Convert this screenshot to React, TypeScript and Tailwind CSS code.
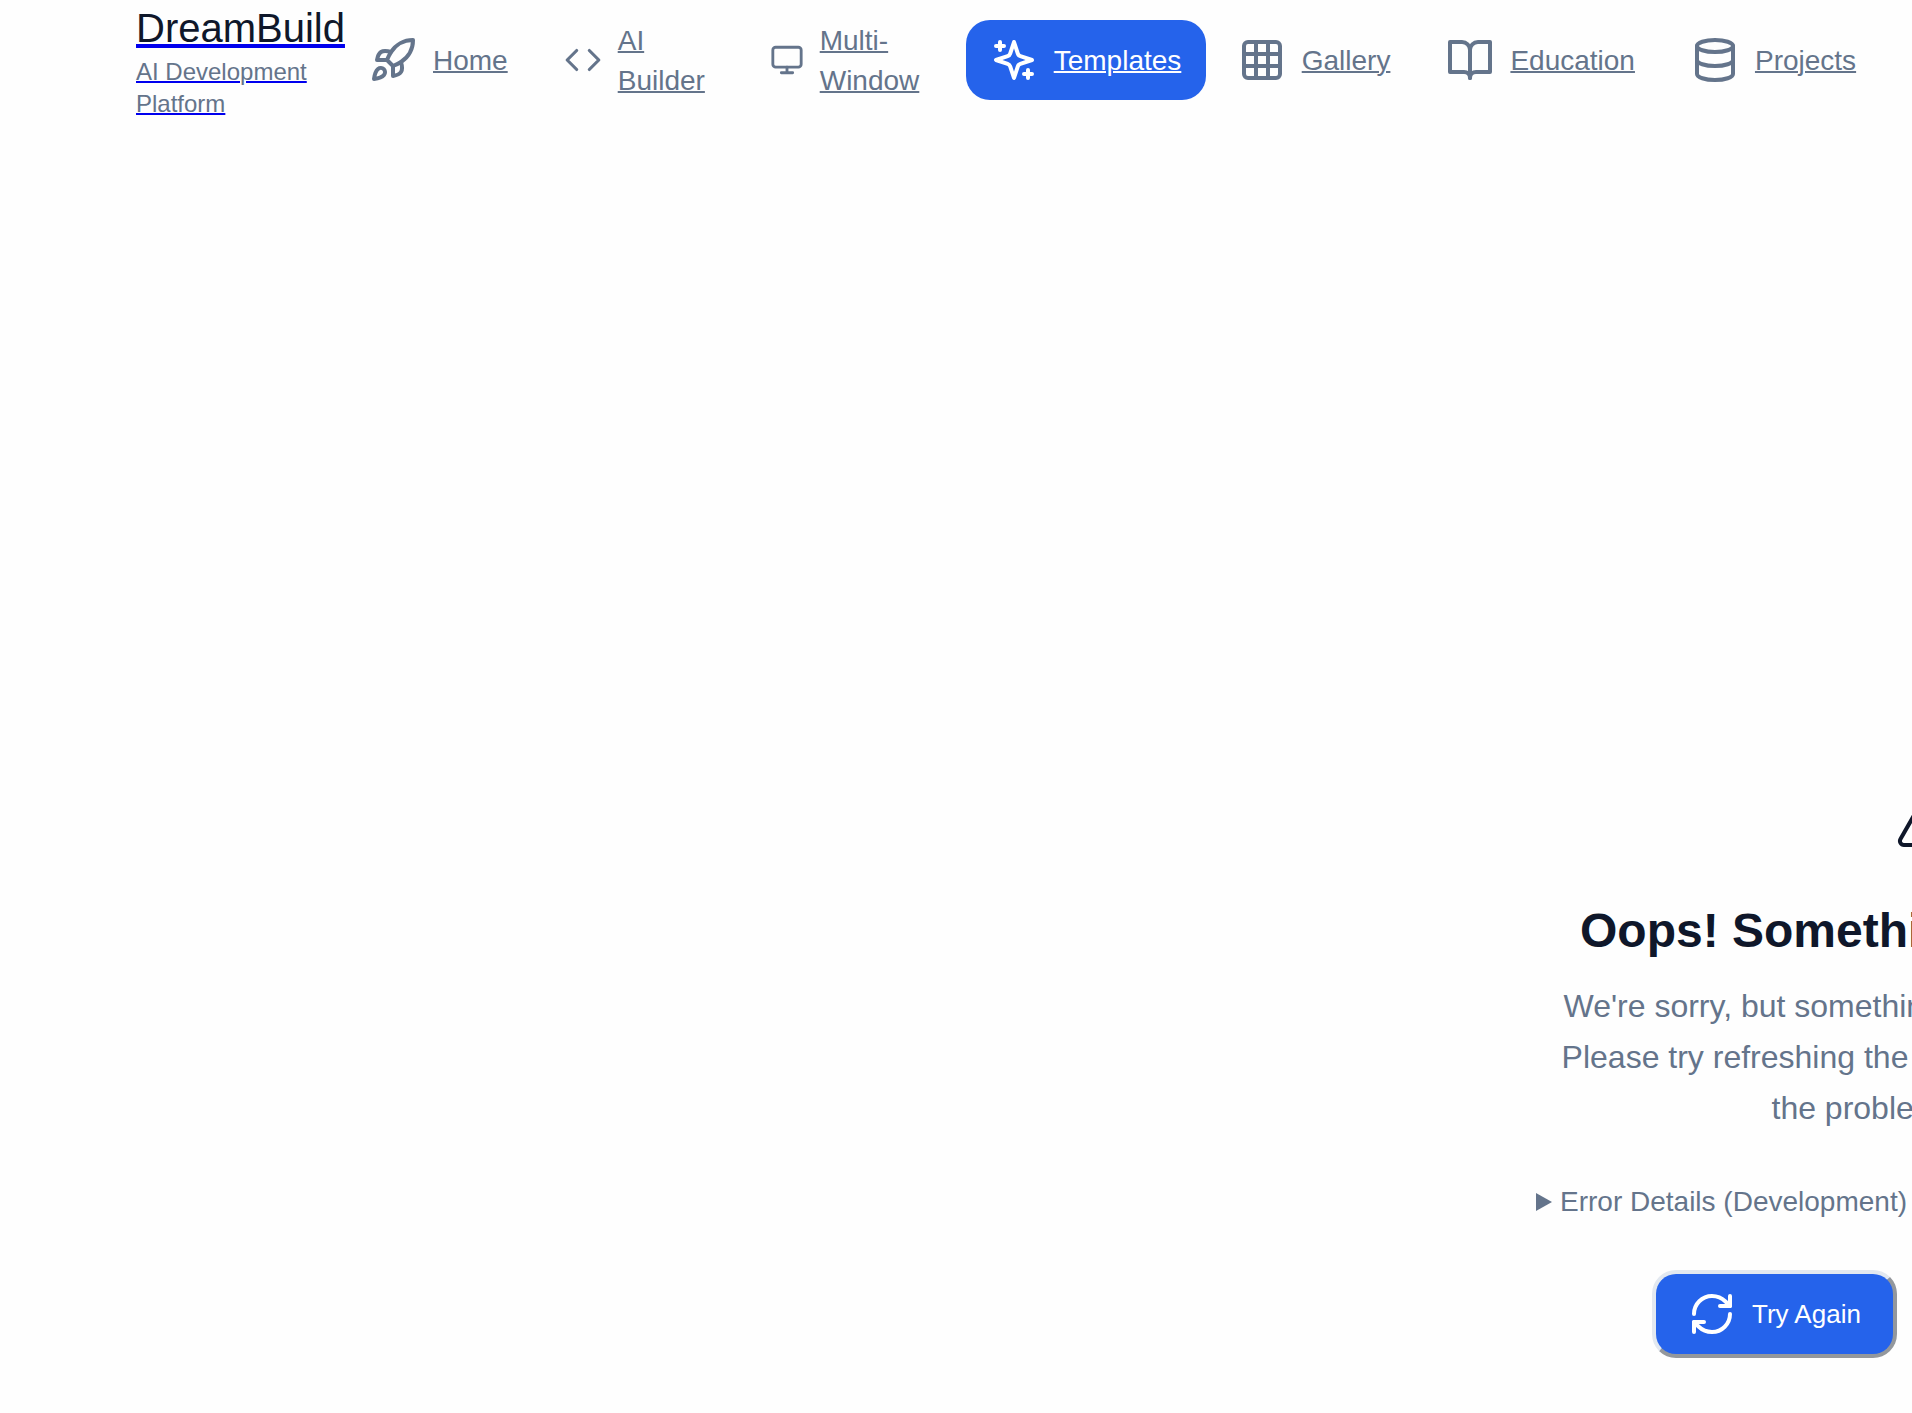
import type { ReactNode } from "react";

function Icon({ children, className = "w-12" }: { children: ReactNode; className?: string }) {
  return (
    <svg
      className={`h-12 shrink-0 ${className}`}
      viewBox="0 0 24 24"
      fill="none"
      stroke="currentColor"
      strokeWidth="2"
      strokeLinecap="round"
      strokeLinejoin="round"
      aria-hidden="true"
    >
      {children}
    </svg>
  );
}

type NavItem = {
  label: string;
  active?: boolean;
  iconClass?: string;
  labelClass?: string;
  icon: ReactNode;
};

const navItems: NavItem[] = [
  {
    label: "Home",
    icon: (
      <>
        <path d="M4.5 16.5c-1.5 1.26-2 5-2 5s3.74-.5 5-2c.71-.84.7-2.13-.09-2.91a2.18 2.18 0 0 0-2.91-.09z" />
        <path d="m12 15-3-3a22 22 0 0 1 2-3.95A12.88 12.88 0 0 1 22 2c0 2.72-.78 7.5-6 11a22.35 22.35 0 0 1-4 2z" />
        <path d="M9 12H4s.55-3.03 2-4c1.62-1.08 5 0 5 0" />
        <path d="M12 15v5s3.03-.55 4-2c1.08-1.62 0-5 0-5" />
      </>
    ),
  },
  {
    label: "AI Builder",
    iconClass: "w-[38px]",
    labelClass: "w-24",
    icon: (
      <>
        <path d="m16 18 6-6-6-6" />
        <path d="m8 6-6 6 6 6" />
      </>
    ),
  },
  {
    label: "Multi-Window",
    iconClass: "w-[34px]",
    labelClass: "w-[114px]",
    icon: (
      <>
        <rect width="20" height="14" x="2" y="3" rx="2" />
        <path d="M8 21h8M12 17v4" />
      </>
    ),
  },
  {
    label: "Templates",
    active: true,
    labelClass: "w-32",
    icon: (
      <>
        <path d="m12 3-1.912 5.813a2 2 0 0 1-1.275 1.275L3 12l5.813 1.912a2 2 0 0 1 1.275 1.275L12 21l1.912-5.813a2 2 0 0 1 1.275-1.275L21 12l-5.813-1.912a2 2 0 0 1-1.275-1.275L12 3Z" />
        <path d="M5 3v4M19 17v4M3 5h4M17 19h4" />
      </>
    ),
  },
  {
    label: "Gallery",
    icon: (
      <>
        <rect width="18" height="18" x="3" y="3" rx="2" />
        <path d="M3 9h18M3 15h18M9 3v18M15 3v18" />
      </>
    ),
  },
  {
    label: "Education",
    icon: (
      <>
        <path d="M2 3h6a4 4 0 0 1 4 4v14a3 3 0 0 0-3-3H2z" />
        <path d="M22 3h-6a4 4 0 0 0-4 4v14a3 3 0 0 1 3-3h7z" />
      </>
    ),
  },
  {
    label: "Projects",
    icon: (
      <>
        <ellipse cx="12" cy="5" rx="9" ry="3" />
        <path d="M3 5v14a9 3 0 0 0 18 0V5" />
        <path d="M3 12a9 3 0 0 0 18 0" />
      </>
    ),
  },
];

function Header() {
  return (
    <header className="flex items-center pl-[136px]">
      <a href="#" className="w-[209px] shrink-0 text-[#64748b]">
        <span className="block text-[40px] leading-14 text-[#0f172a] underline decoration-[#0000ee] decoration-4">
          DreamBuild
        </span>
        <span className="block text-2xl leading-8 underline decoration-[#0000ee] decoration-2">
          AI Development Platform
        </span>
      </a>
      <nav className="flex items-center gap-2" aria-label="Main">
        {navItems.map((item) => (
          <a
            key={item.label}
            href="#"
            aria-current={item.active ? "page" : undefined}
            className={`flex shrink-0 items-center gap-4 rounded-3xl px-6 text-[28px] leading-10 ${
              item.active ? "bg-[#2563eb] py-4 text-white" : "text-[#64748b]"
            }`}
          >
            <Icon className={item.iconClass}>{item.icon}</Icon>
            <span className={`pt-0.5 underline decoration-2 ${item.labelClass ?? ""}`}>{item.label}</span>
          </a>
        ))}
      </nav>
    </header>
  );
}

function ErrorPanel() {
  return (
    <section className="ml-[calc(100%-376px)] w-3xl text-center">
      <Icon className="mx-auto w-12">
        <path d="m21.73 18-8-14a2 2 0 0 0-3.48 0l-8 14A2 2 0 0 0 4 21h16a2 2 0 0 0 1.73-3Z" />
        <path d="M12 9v4M12 17h.01" />
      </Icon>
      <h1 className="mt-12 text-5xl leading-16 font-bold">Oops! Something went wrong</h1>
      <p className="mt-[18px] text-[32px] leading-[51px] text-[#64748b]">
        We're sorry, but something unexpected happened.
        <br />
        Please try refreshing the page or contact support if
        <br />
        the problem persists.
      </p>
      <details className="group mt-12 text-left text-[28px] leading-10 text-[#64748b]">
        <summary className="flex cursor-pointer list-none items-center gap-2">
          <svg className="h-[18px] w-4 group-open:rotate-90" viewBox="0 0 16 18" fill="currentColor" aria-hidden="true">
            <path d="M0 0 16 9 0 18z" />
          </svg>
          Error Details (Development)
        </summary>
      </details>
      <button
        type="button"
        className="mt-12 ml-[116px] flex items-center gap-4 rounded-3xl border-4 border-[#e2e8f0] bg-[#2563eb] px-8 py-4 text-[26px] leading-8 text-white [border-style:outset]"
      >
        <Icon>
          <path d="M3 12a9 9 0 0 1 9-9 9.75 9.75 0 0 1 6.74 2.74L21 8" />
          <path d="M21 3v5h-5" />
          <path d="M21 12a9 9 0 0 1-9 9 9.75 9.75 0 0 1-6.74-2.74L3 16" />
          <path d="M8 16H3v5" />
        </Icon>
        Try Again
      </button>
    </section>
  );
}

export default function App() {
  return (
    <div className="min-h-screen overflow-hidden bg-[#fefefe] font-['Liberation_Sans',Arial,sans-serif] text-[#0f172a]">
      <Header />
      <main className="pt-[683px] pb-10">
        <ErrorPanel />
      </main>
    </div>
  );
}
